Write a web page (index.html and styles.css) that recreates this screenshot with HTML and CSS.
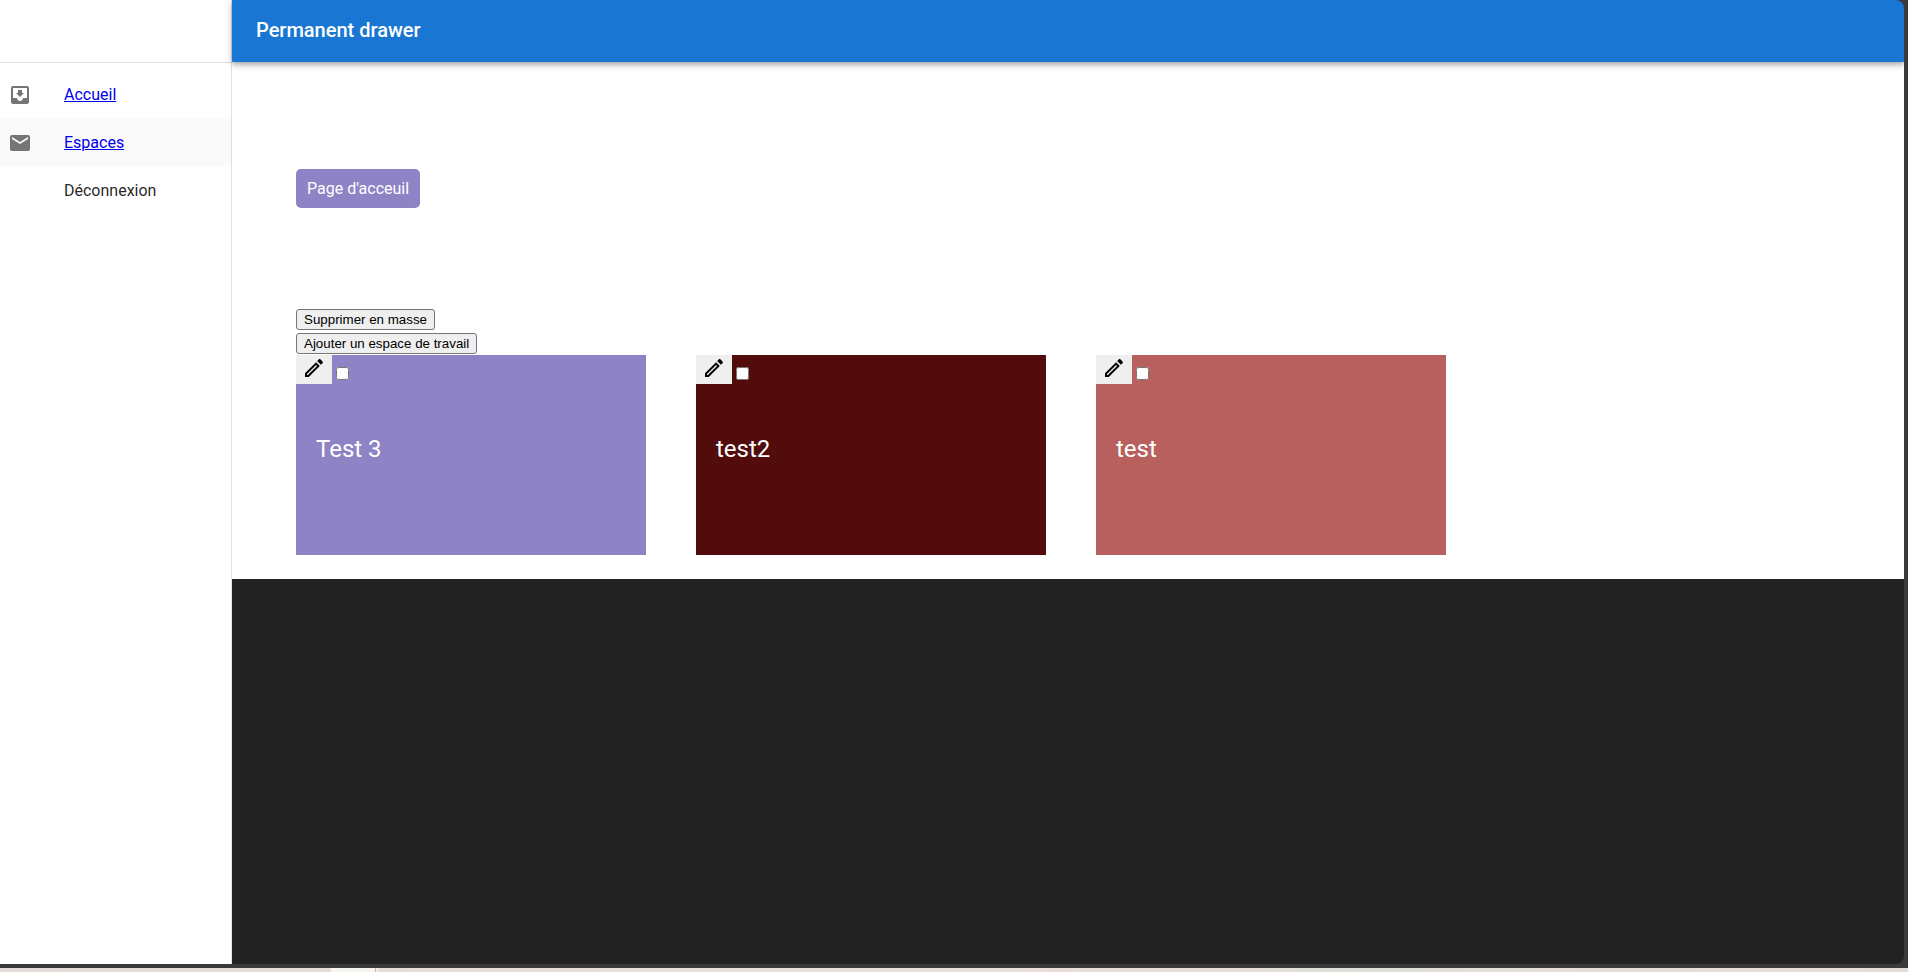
FILE: index.html
```html
<!DOCTYPE html>
<html lang="fr">
<head>
<meta charset="utf-8">
<title>Permanent drawer</title>
<link rel="stylesheet" href="styles.css">
</head>
<body>
<div class="window">
  <nav class="drawer">
    <div class="drawer-top"></div>
    <ul class="menu">
      <li class="menu-item">
        <svg class="menu-icon" viewBox="0 0 24 24" aria-hidden="true"><path d="M19 3H4.990c-1.110 0-1.980.9-1.980 2L3 19c0 1.100.880 2 1.990 2H19c1.100 0 2-.9 2-2V5c0-1.100-.9-2-2-2zm0 12h-4c0 1.660-1.350 3-3 3s-3-1.340-3-3H4.990V5H19v10zm-3-5h-2V7h-4v3H8l4 4 4-4z"/></svg>
        <a class="menu-link" href="#accueil">Accueil</a>
      </li>
      <li class="menu-item menu-item-active">
        <svg class="menu-icon" viewBox="0 0 24 24" aria-hidden="true"><path d="M20 4H4c-1.100 0-1.990.9-1.990 2L2 18c0 1.100.9 2 2 2h16c1.100 0 2-.9 2-2V6c0-1.100-.9-2-2-2zm0 4l-8 5-8-5V6l8 5 8-5v2z"/></svg>
        <a class="menu-link" href="#espaces">Espaces</a>
      </li>
      <li class="menu-item">
        <span class="menu-icon"></span>
        <button class="menu-button" type="button">Déconnexion</button>
      </li>
    </ul>
  </nav>
  <div class="content">
    <header class="appbar"><h1 class="appbar-title">Permanent drawer</h1></header>
    <main class="page">
      <button class="home" type="button">Page d'acceuil</button>
      <div class="actions">
        <button class="action" type="button">Supprimer en masse</button>
        <button class="action" type="button">Ajouter un espace de travail</button>
      </div>
      <div class="cards">
        <article class="card card-lilac">
          <div class="card-tools">
            <button class="edit" type="button" aria-label="Modifier Test 3"><svg class="edit-icon" viewBox="0 0 24 24" aria-hidden="true"><path d="M17.660 3c-.250 0-.510.100-.700.290l-1.830 1.830 3.750 3.750 1.830-1.830c.390-.390.390-1.020 0-1.410l-2.340-2.340c-.200-.200-.450-.290-.710-.290zM14.060 6.190 3 17.250V21h3.750L17.810 9.940l-3.750-3.750zM5.920 19H5v-.920l9.060-9.060.920.920L5.920 19z"/></svg></button>
            <input class="pick" type="checkbox" aria-label="Sélectionner Test 3">
          </div>
          <h2 class="card-title">Test 3</h2>
        </article>
        <article class="card card-maroon">
          <div class="card-tools">
            <button class="edit" type="button" aria-label="Modifier test2"><svg class="edit-icon" viewBox="0 0 24 24" aria-hidden="true"><path d="M17.660 3c-.250 0-.510.100-.700.290l-1.830 1.830 3.750 3.750 1.830-1.830c.390-.390.390-1.020 0-1.410l-2.340-2.340c-.200-.200-.450-.290-.710-.290zM14.060 6.190 3 17.250V21h3.750L17.810 9.940l-3.750-3.750zM5.920 19H5v-.920l9.060-9.060.920.920L5.920 19z"/></svg></button>
            <input class="pick" type="checkbox" aria-label="Sélectionner test2">
          </div>
          <h2 class="card-title">test2</h2>
        </article>
        <article class="card card-rose">
          <div class="card-tools">
            <button class="edit" type="button" aria-label="Modifier test"><svg class="edit-icon" viewBox="0 0 24 24" aria-hidden="true"><path d="M17.660 3c-.250 0-.510.100-.700.290l-1.830 1.830 3.750 3.750 1.830-1.830c.390-.390.390-1.020 0-1.410l-2.340-2.340c-.200-.200-.450-.290-.710-.290zM14.060 6.190 3 17.250V21h3.750L17.810 9.940l-3.750-3.750zM5.920 19H5v-.920l9.060-9.060.920.920L5.920 19z"/></svg></button>
            <input class="pick" type="checkbox" aria-label="Sélectionner test">
          </div>
          <h2 class="card-title">test</h2>
        </article>
      </div>
    </main>
  </div>
</div>
<div class="desktop"></div>
</body>
</html>
```

FILE: styles.css
```css
* { box-sizing: border-box; }

body {
  margin: 0;
  min-height: 100vh;
  display: flex;
  flex-direction: column;
  background: #3a3a3a;
  color: rgba(0, 0, 0, 0.87);
  font-family: Roboto, "Liberation Sans", sans-serif;
  font-size: 16px;
  line-height: 24px;
}

.window {
  flex: 1;
  display: flex;
  margin: 0 4px 4px 0;
  background: #222;
  border-radius: 0 8px 8px 0;
  overflow: hidden;
}

.drawer {
  width: 232px;
  flex-shrink: 0;
  background: #fff;
  border-right: 1px solid #e0e0e0;
}

.drawer-top {
  height: 63px;
  border-bottom: 1px solid #e0e0e0;
}

.menu {
  margin: 0;
  padding: 8px 0;
  list-style: none;
}

.menu-item {
  display: flex;
  align-items: center;
  gap: 32px;
  height: 48px;
  padding: 0 8px;
}

.menu-item-active { background: #fafafa; }

.menu-icon {
  width: 24px;
  height: 24px;
  fill: #757575;
}

.menu-link { color: #00e; }

.menu-button {
  padding: 0;
  border: 0;
  background: none;
  color: inherit;
  font: inherit;
}

.content {
  flex: 1;
  min-width: 0;
}

.appbar {
  position: relative;
  height: 62px;
  padding: 14px 24px 0;
  background: #1976d2;
  color: #fff;
  box-shadow: 0 2px 4px -1px rgba(0, 0, 0, 0.2), 0 4px 5px rgba(0, 0, 0, 0.14), 0 1px 10px rgba(0, 0, 0, 0.12);
}

.appbar-title {
  margin: 0;
  font-size: 20px;
  font-weight: 500;
  line-height: 32px;
}

.page {
  padding: 107px 64px 24px;
  background: #fff;
}

.home {
  display: block;
  padding: 10px 11px;
  border: 0;
  border-radius: 5px;
  background: #8d83c5;
  color: #fff;
  font: inherit;
  line-height: 19px;
}

.actions {
  display: flex;
  flex-direction: column;
  align-items: flex-start;
  gap: 3px;
  margin-top: 101px;
}

.action {
  height: 21px;
  padding: 1px 7px;
  border: 1px solid #767676;
  border-radius: 3px;
  background: #efefef;
  color: #000;
  font-family: "Liberation Sans", Arial, sans-serif;
}

.cards {
  display: flex;
  flex-wrap: wrap;
  gap: 50px;
  margin-top: 1px;
}

.card {
  width: 350px;
  height: 200px;
  color: #fff;
}

.card-lilac { background: #8d83c5; }
.card-maroon { background: #520c0c; }
.card-rose { background: #b7605e; }

.card-tools {
  display: flex;
  align-items: flex-start;
  gap: 4px;
}

.edit {
  height: 29px;
  padding: 1px 6px 4px;
  border: 0;
  background: #efefef;
}

.edit-icon {
  display: block;
  width: 24px;
  height: 24px;
}

.pick {
  width: 13px;
  height: 13px;
  margin: 12px 0 0;
}

.card-title {
  margin: 0;
  padding: 49px 20px;
  font-size: 24px;
  font-weight: 400;
  line-height: 32px;
}

.desktop {
  height: 4px;
  background: linear-gradient(90deg, transparent 331px, #f6f4f1 331px 375px, #bbb 375px 376px, #eee9e4 376px 379px, transparent 379px), linear-gradient(90deg, #e2dbd9, #e8e0da 50%, #e9ddd7 55%, #e1dfdb 70%, #e6ddd8);
}
```
